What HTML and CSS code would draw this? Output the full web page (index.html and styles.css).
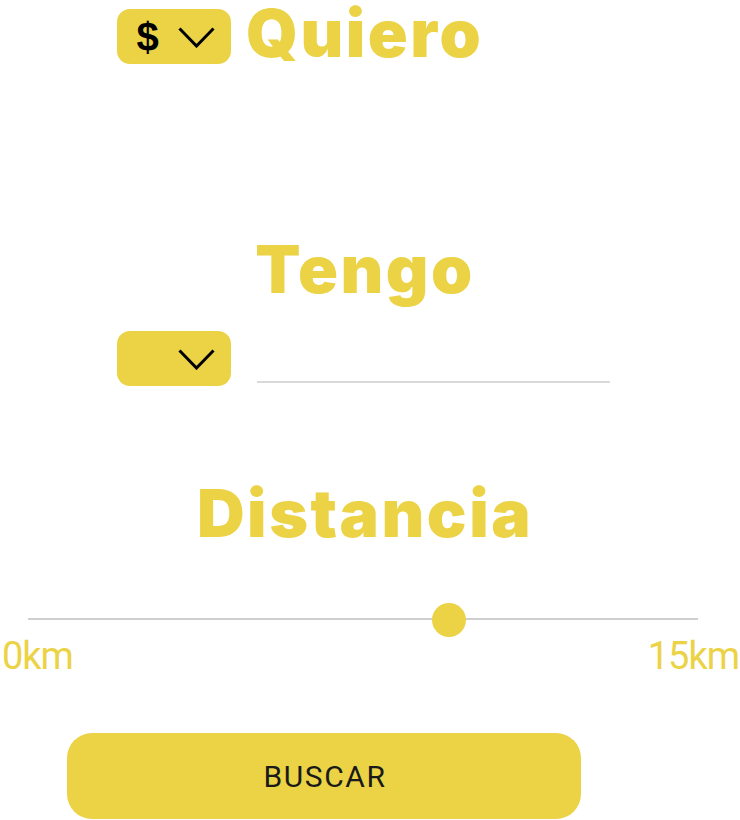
FILE: index.html
```html
<!DOCTYPE html>
<html lang="es">
<head>
<meta charset="utf-8">
<title>Buscar</title>
<link rel="stylesheet" href="styles.css">
</head>
<body>
<main class="page">
  <section class="quiero-row">
    <button class="dropdown">
      <span class="currency">$</span>
      <svg class="chevron" width="37" height="21" viewBox="0 0 37 21"><polyline points="1.5,1.5 18.5,19 35.5,1.5" fill="none" stroke="#000" stroke-width="3"/></svg>
    </button>
    <h1 class="title title-quiero">Quiero</h1>
  </section>

  <h2 class="title title-tengo">Tengo</h2>

  <section class="tengo-row">
    <button class="dropdown">
      <span class="currency"></span>
      <svg class="chevron" width="37" height="21" viewBox="0 0 37 21"><polyline points="1.5,1.5 18.5,19 35.5,1.5" fill="none" stroke="#000" stroke-width="3"/></svg>
    </button>
    <div class="amount-input"></div>
  </section>

  <h2 class="title title-distancia">Distancia</h2>

  <div class="slider">
    <div class="track"></div>
    <div class="thumb" style="left: 62.8%"></div>
  </div>
  <div class="slider-labels">
    <span>0km</span>
    <span>15km</span>
  </div>

  <button class="search-btn">BUSCAR</button>
</main>
</body>
</html>
```

FILE: styles.css
```css
* { box-sizing: border-box; }
html, body { margin: 0; padding: 0; background: #fff; }
body { width: 740px; height: 820px; overflow: hidden; font-family: "Roboto", "Liberation Sans", sans-serif; }

.page { display: flex; flex-direction: column; }

.title {
  margin: 0;
  font-family: "Inter", "Liberation Sans", sans-serif;
  font-weight: 900;
  font-size: 66px;
  line-height: 66px;
  color: #ebd345;
  letter-spacing: 2.5px;
}

.quiero-row {
  display: flex;
  align-items: flex-start;
  padding-left: 117px;
  gap: 15px;
}
.quiero-row .dropdown { margin-top: 9px; }

.dropdown {
  width: 114px;
  height: 55px;
  border: none;
  border-radius: 13px;
  background: #ebd345;
  display: flex;
  align-items: center;
  padding: 0 16px 0 20px;
  gap: 20px;
  flex-shrink: 0;
}
.currency {
  width: 21px;
  font-family: "Liberation Sans", sans-serif;
  font-weight: 700;
  font-size: 40px;
  line-height: 1;
  color: #000;
  display: flex;
  justify-content: center;
}
.chevron { display: block; margin-top: 2px; }

.title-tengo {
  margin-top: 170px;
  text-align: center;
  padding-right: 12px;
  padding-left: 2px;
}

.tengo-row {
  display: flex;
  align-items: flex-start;
  padding-left: 117px;
  gap: 26px;
  margin-top: 29px;
}
.amount-input {
  width: 353px;
  height: 52px;
  border-bottom: 2px solid #d9d9d9;
}

.title-distancia {
  margin-top: 94px;
  text-align: center;
  padding-right: 12px;
  padding-left: 2px;
}

.slider {
  position: relative;
  margin: 57px 42px 0 28px;
  height: 34px;
}
.track {
  margin-top: 15px;
  height: 2px;
  background: #cfcfcf;
}
.thumb {
  position: absolute;
  top: 0;
  width: 34px;
  height: 34px;
  margin-left: -17px;
  border-radius: 50%;
  background: #ebd345;
}

.slider-labels {
  display: flex;
  justify-content: space-between;
  padding: 0 1px 0 2px;
  font-family: "Roboto", sans-serif;
  font-weight: 400;
  font-size: 38px;
  line-height: 38px;
  letter-spacing: -1px;
  color: #ebd345;
}

.search-btn {
  margin: 58px 0 0 67px;
  width: 514px;
  height: 86px;
  border: none;
  border-radius: 25px;
  background: #ebd345;
  font-family: "Roboto", sans-serif;
  font-weight: 400;
  font-size: 30px;
  letter-spacing: 1.6px;
  color: #1a1a1a;
  display: flex;
  align-items: center;
  justify-content: center;
  padding: 0 0 0 2px;
}
```
